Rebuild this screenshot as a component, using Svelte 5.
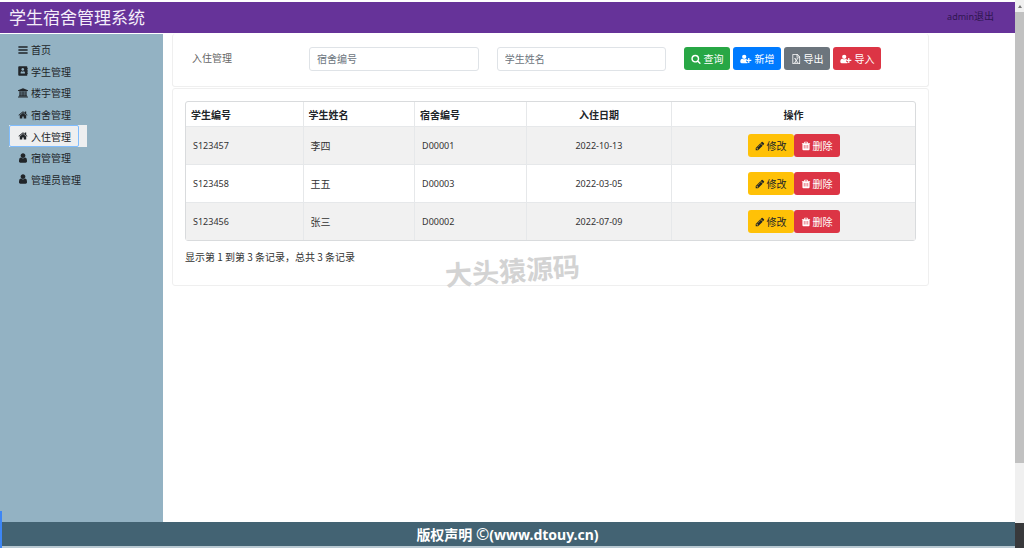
<script lang="ts">
	const menu = [
		{ label: '首页', icon: 'bars' },
		{ label: '学生管理', icon: 'book' },
		{ label: '楼宇管理', icon: 'bank' },
		{ label: '宿舍管理', icon: 'home' },
		{ label: '入住管理', icon: 'home' },
		{ label: '宿管管理', icon: 'user' },
		{ label: '管理员管理', icon: 'user' }
	];

	const actions = [
		{ label: '查询', icon: 'search', kind: 'success' },
		{ label: '新增', icon: 'userplus', kind: 'primary' },
		{ label: '导出', icon: 'excel', kind: 'secondary' },
		{ label: '导入', icon: 'userplus', kind: 'danger' }
	];

	const paths: Record<string, string> = {
		bars: 'M128 256h1536v256H128zM128 768h1536v256H128zM128 1280h1536v256H128z',
		book: 'M320 128h1216q100 0 100 100v180h70v220h-70v150h70v220h-70v150h70v220h-70v200q0 100-100 100H320q-130 0-130-130V258q0-130 130-130zM912 410a225 225 0 1 0 1 0zM560 1310h704v-130q0-210-180-240q-70 60-172 60t-172-60q-180 30-180 240z',
		bank: 'M896 64l896 340v120h-120q0 60-60 60H180q-60 0-60-60H0V404zM250 640h240v720h120V640h240v720h92V640h240v720h120V640h240v720h50q60 0 60 60v60H140v-60q0-60 60-60h50zM70 1530h1652q70 0 70 70v120H0v-120q0-70 70-70z',
		home: 'M1472 992v480q0 26-19 45t-45 19h-384v-384h-256v384h-384q-26 0-45-19t-19-45v-480q0-1 .5-3t.5-3l575-474 575 474q1 2 1 6zm223-69l-62 74q-8 9-21 11h-3q-13 0-21-7l-692-577-692 577q-12 8-24 7-13-2-21-11l-62-74q-8-10-7-23.5t11-21.5l719-599q32-26 76-26t76 26l244 204v-195q0-14 9-23t23-9h192q14 0 23 9t9 23v408l219 182q10 8 11 21.5t-7 23.5z',
		user: 'M1536 1399q0 109-62.5 187t-150.5 78h-854q-88 0-150.5-78t-62.5-187q0-85 8.5-160.5t31.5-152 58.5-131 94-89 134.5-34.5q131 128 313 128t313-128q76 0 134.5 34.5t94 89 58.5 131 31.5 152 8.5 160.5zm-256-887q0 159-112.5 271.5t-271.5 112.5-271.5-112.5-112.5-271.5 112.5-271.5 271.5-112.5 271.5 112.5 112.5 271.5z',
		search: 'M1216 832q0-185-131.5-316.5t-316.5-131.5-316.5 131.5-131.5 316.5 131.5 316.5 316.5 131.5 316.5-131.5 131.5-316.5zm512 832q0 52-38 90t-90 38q-54 0-90-38l-343-342q-179 124-399 124-143 0-273.5-55.5t-225-150-150-225-55.5-273.5 55.5-273.5 150-225 225-150 273.5-55.5 273.5 55.5 225 150 150 225 55.5 273.5q0 220-124 399l343 343q37 37 37 90z',
		userplus: 'M704 128a384 384 0 1 1 0 768a384 384 0 1 1 0-768zM391 832q131 128 313 128t313-128q90 0 150 45v270h-130v256h256v220q-40 41-106 41H221Q0 1664 0 1399Q0 832 391 832zM1408 1024V704h224v320h352v224h-352v352h-224v-352h-320v-224z',
		excel: 'M352 0h800l480 480v1216q0 96-96 96H352q-96 0-96-96V96q0-96 96-96zM400 144v1504h1088V624h-480V144zM1152 180v300h300zM560 768h320v100h-60l124 190 126-190h-66V768h310v100h-80l-208 290 222 320h80v100H996v-100h70l-136-208-138 208h68v100H548v-100h76l226-320-208-290h-82z',
		pencil: 'M491 1536l91-91-235-235-91 91v107h128v128h107zm523-928q0-22-22-22-10 0-17 7l-542 542q-7 7-7 17 0 22 22 22 10 0 17-7l542-542q7-7 7-17zm-54-192l416 416-832 832h-416v-416zm683 96q0 53-37 90l-166 166-416-416 166-165q36-38 90-38 53 0 91 38l235 234q37 39 37 91z',
		trash: 'M672 128h448q60 0 90 70l80 186h310q32 0 32 32v96q0 32-32 32h-64v950q0 170-160 170H416q-160 0-160-170V544h-64q-32 0-32-32v-96q0-32 32-32h310l80-186q30-70 90-70zM690 256l-50 128h512l-50-128zM512 704v640h110V704zM841 704v640h110V704zM1170 704v640h110V704z'
	};

	// icons that do not fill the usual 1792 square
	const boxes: Record<string, string> = {
		userplus: '0 0 2048 1792',
		book: '150 96 1600 1600',
		user: '96 96 1600 1600',
		bars: '64 64 1664 1664'
	};

	let rows = $state([
		{ no: 'S123457', name: '李四', room: 'D00001', date: '2022-10-13' },
		{ no: 'S123458', name: '王五', room: 'D00003', date: '2022-03-05' },
		{ no: 'S123456', name: '张三', room: 'D00002', date: '2022-07-09' }
	]);

	let active = $state(4);
	let room = $state('');
	let student = $state('');
</script>

{#snippet icon(name: string)}
	<svg class="icon" viewBox={boxes[name] ?? '0 0 1792 1792'} class:wide={name === 'userplus'} aria-hidden="true">
		<path d={paths[name]} fill="currentColor" fill-rule="evenodd" />
	</svg>
{/snippet}

<div class="window">
	<div class="page">
		<header>
			<h1>学生宿舍管理系统</h1>
			<a href="#logout"><span class="latin">admin</span>退出</a>
		</header>

		<div class="body">
			<nav>
				<ul>
					{#each menu as item, i}
						<li class:active={active === i}>
							<button onclick={() => (active = i)}>{@render icon(item.icon)}{item.label}</button>
						</li>
					{/each}
				</ul>
			</nav>

			<main>
				<section class="card filter">
					<h2>入住管理</h2>
					<div class="cell"><input type="text" placeholder="宿舍编号" aria-label="宿舍编号" bind:value={room} /></div>
					<div class="cell"><input type="text" placeholder="学生姓名" aria-label="学生姓名" bind:value={student} /></div>
					<div class="cell actions">
						{#each actions as a}
							<button class="btn {a.kind}">{@render icon(a.icon)}{a.label}</button>
						{/each}
					</div>
				</section>

				<section class="card list">
					<table>
						<colgroup>
							<col class="c-no" /><col class="c-name" /><col class="c-room" /><col class="c-date" /><col />
						</colgroup>
						<thead>
							<tr>
								<th>学生编号</th>
								<th>学生姓名</th>
								<th>宿舍编号</th>
								<th class="center">入住日期</th>
								<th class="center">操作</th>
							</tr>
						</thead>
						<tbody>
							{#each rows as row}
								<tr>
									<td class="latin">{row.no}</td>
									<td>{row.name}</td>
									<td class="latin">{row.room}</td>
									<td class="latin center">{row.date}</td>
									<td class="center">
										<div class="ops">
											<button class="btn warning">{@render icon('pencil')}修改</button>
											<button class="btn danger">{@render icon('trash')}删除</button>
										</div>
									</td>
								</tr>
							{/each}
						</tbody>
					</table>
					<p>显示第 1 到第 3 条记录，总共 3 条记录</p>
					<span class="watermark">大头猿源码</span>
				</section>
			</main>
		</div>

		<footer>版权声明 <span class="copy">©</span>(www.dtouy.cn)</footer>
		<div class="marker"></div>
	</div>

	<div class="scrollbar">
		<div class="arrow"></div>
		<div class="thumb"></div>
		<div class="track"></div>
		<div class="corner"></div>
	</div>
</div>

<style>
	:global(body) {
		margin: 0;
		background: #fff;
	}

	.window {
		display: flex;
		height: 100vh;
		font-family: 'Noto Sans', 'Noto Sans CJK SC', sans-serif;
		font-size: 10px;
		color: #212529;
	}

	.window * {
		box-sizing: border-box;
	}

	.page {
		position: relative;
		flex: 1;
		min-width: 0;
		display: flex;
		flex-direction: column;
		padding: 2px 0;
		background: linear-gradient(#fff 50%, #b9c9d2 50%);
	}

	header {
		display: flex;
		justify-content: space-between;
		align-items: center;
		height: 31px;
		padding: 1px 21px 0 9px;
		background: #663399;
	}

	h1 {
		margin: 0;
		font-size: 17px;
		font-weight: 400;
		line-height: 24px;
		color: #f4eef9;
	}

	header a {
		color: #2f1650;
		text-decoration: none;
		line-height: 16px;
		padding-bottom: 3px;
	}

	.latin {
		font-size: 9px;
	}

	.body {
		flex: 1;
		display: flex;
		padding-top: 1px;
		background: #fff;
	}

	nav {
		width: 163px;
		padding: 5px 9px;
		background: #93b2c3;
	}

	ul {
		display: flex;
		flex-direction: column;
		width: 78px;
		height: 151px;
		margin: 0;
		padding: 0;
		list-style: none;
	}

	li {
		flex: 1;
		display: flex;
	}

	nav button {
		display: flex;
		align-items: center;
		gap: 3px;
		padding: 0 7px 0 8px;
		border: 1px solid transparent;
		border-radius: 2px;
		background: none;
		font: inherit;
		color: #212529;
		white-space: nowrap;
	}

	li.active {
		background: #eeeff0;
	}

	li.active button {
		border-color: #80bdff;
	}

	.icon {
		width: 10px;
		height: 10px;
		flex: none;
	}

	.icon.wide {
		width: 12px;
	}

	main {
		flex: 1;
		padding: 0 8.5% 0 9px;
	}

	.card {
		border: 1px solid #efefef;
		border-radius: 3px;
	}

	.filter {
		display: grid;
		grid-template-columns: 2fr 3fr 3fr 4fr;
		align-items: start;
		border-top: 0;
		padding: 13px 2px 15px;
		margin-bottom: 1px;
	}

	h2 {
		margin: 0;
		padding-left: 17px;
		font-size: 10px;
		font-weight: 400;
		line-height: 23px;
		color: #666;
	}

	.cell {
		padding: 0 9px;
	}

	input {
		display: block;
		width: 100%;
		height: 24px;
		padding: 0 7px;
		border: 1px solid #dfe3e7;
		border-radius: 3px;
		font: inherit;
		color: #495057;
	}

	input::placeholder {
		color: #6c757d;
	}

	.actions {
		display: flex;
		gap: 3px;
	}

	.btn {
		display: flex;
		align-items: center;
		gap: 2px;
		height: 23px;
		padding: 0 7px;
		border: 0;
		border-radius: 3px;
		font: inherit;
		color: #fff;
		white-space: nowrap;
	}

	.success {
		background: #28a745;
	}

	.primary {
		background: #007bff;
	}

	.secondary {
		background: #6c757d;
	}

	.danger {
		background: #dc3545;
	}

	.warning {
		background: #ffc107;
		color: #212529;
	}

	.list {
		position: relative;
		padding: 12px 12px 20px;
	}

	table {
		width: 100%;
		table-layout: fixed;
		border-collapse: separate;
		border-spacing: 0;
		border: 1px solid #d9dbdd;
		border-radius: 3px;
	}

	.c-no {
		width: 16%;
	}

	.c-name,
	.c-room {
		width: 15.3%;
	}

	.c-date {
		width: 20%;
	}

	th,
	td {
		border-left: 1px solid #e6e8ea;
		text-align: left;
	}

	th {
		height: 24px;
		padding: 0 5px;
		font-weight: 700;
	}

	td {
		height: 38px;
		padding: 0 7px;
		border-top: 1px solid #e6e8ea;
		color: #333;
	}

	th:first-child,
	td:first-child {
		border-left: 0;
	}

	tbody tr:nth-child(odd) {
		background: #f1f1f1;
	}

	th.center,
	td.center {
		text-align: center;
	}

	.ops {
		display: flex;
		justify-content: center;
	}

	p {
		margin: 8px 0 0;
		font-family: 'Noto Sans CJK SC', sans-serif;
		line-height: 16px;
		color: #333;
	}

	.watermark {
		position: absolute;
		left: 36%;
		bottom: -4px;
		font-size: 27px;
		font-weight: 700;
		line-height: 36px;
		color: #d3d3d3;
		transform: rotate(-4deg);
	}

	footer {
		height: 24px;
		background: #436373;
		color: #fff;
		font-size: 14px;
		font-weight: 700;
		line-height: 24px;
		text-align: center;
	}

	.copy {
		font-size: 16px;
		font-weight: 400;
	}

	/* blue edge that runs over the sidebar and footer */
	.marker {
		position: absolute;
		left: 0;
		bottom: 0;
		width: 2px;
		height: 37px;
		background: #3d86f5;
	}

	.scrollbar {
		display: flex;
		flex-direction: column;
		width: 9px;
		background: #f0f0f0;
	}

	.arrow {
		height: 12px;
		display: flex;
		align-items: center;
		justify-content: center;
	}

	.arrow::before {
		content: '';
		border: 2px solid transparent;
		border-top: 0;
		border-bottom: 3px solid #777;
	}

	.thumb {
		flex: 15;
		background: #c1c1c1;
	}

	.track {
		flex: 2;
	}

	.corner {
		height: 25px;
		background: #38393b;
	}
</style>
